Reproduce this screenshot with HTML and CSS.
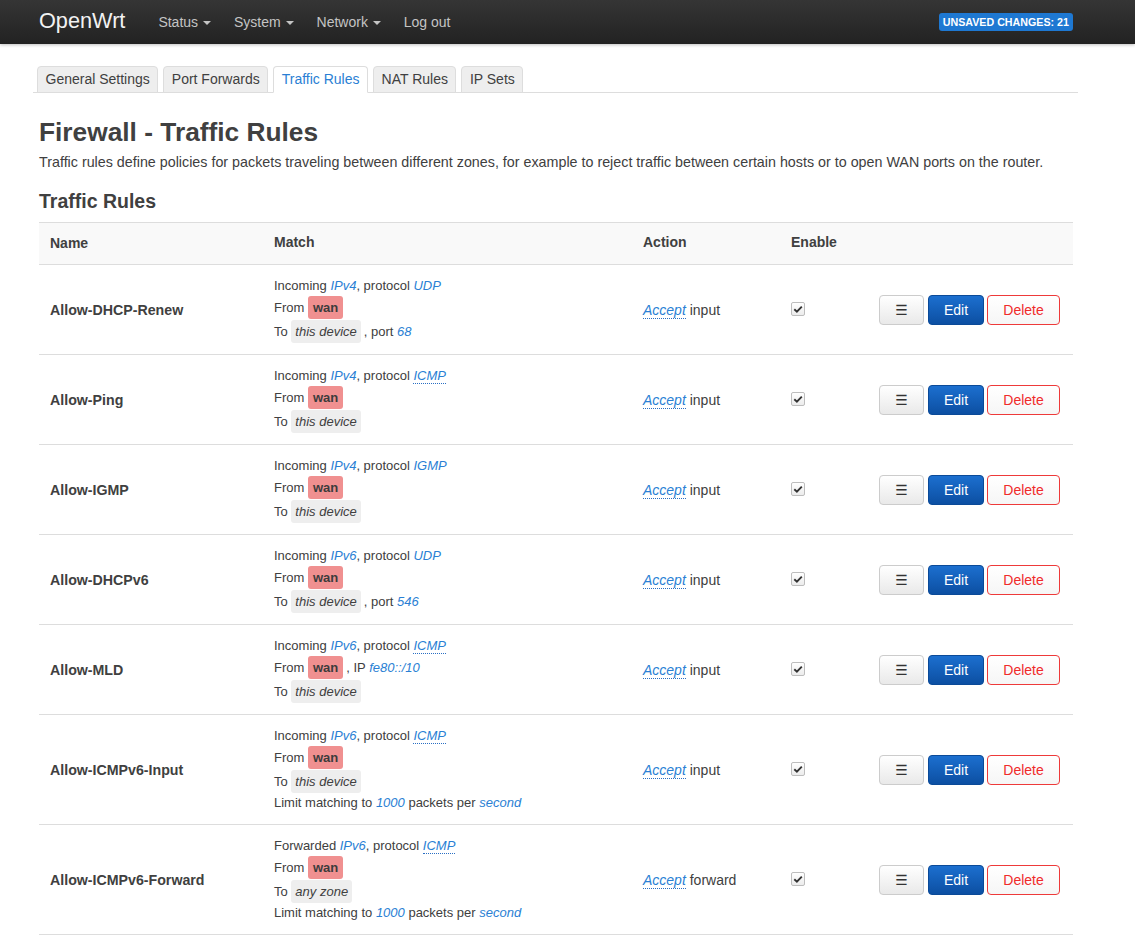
FILE: index.html
```html
<!DOCTYPE html>
<html lang="en">
<head>
<meta charset="utf-8">
<title>OpenWrt - Firewall - Traffic Rules</title>
<link rel="stylesheet" href="styles.css">
</head>
<body>
<header class="topbar">
  <a class="brand" href="#">OpenWrt</a>
  <ul class="nav">
    <li><a href="#">Status <span class="caret"></span></a></li>
    <li><a href="#">System <span class="caret"></span></a></li>
    <li><a href="#">Network <span class="caret"></span></a></li>
    <li><a href="#">Log out</a></li>
  </ul>
  <span class="unsaved">Unsaved Changes: 21</span>
</header>

<main class="container">
  <ul class="tabs">
    <li class="tab"><a href="#">General Settings</a></li>
    <li class="tab"><a href="#">Port Forwards</a></li>
    <li class="tab active"><a href="#">Traffic Rules</a></li>
    <li class="tab"><a href="#">NAT Rules</a></li>
    <li class="tab"><a href="#">IP Sets</a></li>
  </ul>

  <div class="content">
    <h2 class="title">Firewall - Traffic Rules</h2>
    <p class="desc">Traffic rules define policies for packets traveling between different zones, for example to reject traffic between certain hosts or to open WAN ports on the router.</p>
    <h3 class="section">Traffic Rules</h3>

    <table class="rules">
      <colgroup>
        <col class="c-name"><col class="c-match"><col class="c-action"><col class="c-enable"><col class="c-btns">
      </colgroup>
      <thead>
        <tr><th class="th-name">Name</th><th>Match</th><th>Action</th><th>Enable</th><th></th></tr>
      </thead>
      <tbody>
        <tr>
          <td class="name">Allow-DHCP-Renew</td>
          <td class="match">
            <div class="ml">Incoming <var>IPv4</var>, protocol <var>UDP</var></div>
            <div class="ml zl">From <span class="zone wan">wan</span></div>
            <div class="ml zl">To <span class="zone dev">this device</span>, port <var>68</var></div>
          </td>
          <td class="action"><var class="ul">Accept</var> input</td>
          <td class="enable"><span class="cb"><svg viewBox="0 0 14 14" width="14" height="14"><path d="M3.3 7.2 L5.9 9.6 L10.8 4.6" fill="none" stroke="#333" stroke-width="1.9"/></svg></span></td>
          <td class="btns"><button class="btn more">☰</button><button class="btn edit">Edit</button><button class="btn del">Delete</button></td>
        </tr>
        <tr>
          <td class="name">Allow-Ping</td>
          <td class="match">
            <div class="ml">Incoming <var>IPv4</var>, protocol <var class="ul">ICMP</var></div>
            <div class="ml zl">From <span class="zone wan">wan</span></div>
            <div class="ml zl">To <span class="zone dev">this device</span></div>
          </td>
          <td class="action"><var class="ul">Accept</var> input</td>
          <td class="enable"><span class="cb"><svg viewBox="0 0 14 14" width="14" height="14"><path d="M3.3 7.2 L5.9 9.6 L10.8 4.6" fill="none" stroke="#333" stroke-width="1.9"/></svg></span></td>
          <td class="btns"><button class="btn more">☰</button><button class="btn edit">Edit</button><button class="btn del">Delete</button></td>
        </tr>
        <tr>
          <td class="name">Allow-IGMP</td>
          <td class="match">
            <div class="ml">Incoming <var>IPv4</var>, protocol <var>IGMP</var></div>
            <div class="ml zl">From <span class="zone wan">wan</span></div>
            <div class="ml zl">To <span class="zone dev">this device</span></div>
          </td>
          <td class="action"><var class="ul">Accept</var> input</td>
          <td class="enable"><span class="cb"><svg viewBox="0 0 14 14" width="14" height="14"><path d="M3.3 7.2 L5.9 9.6 L10.8 4.6" fill="none" stroke="#333" stroke-width="1.9"/></svg></span></td>
          <td class="btns"><button class="btn more">☰</button><button class="btn edit">Edit</button><button class="btn del">Delete</button></td>
        </tr>
        <tr>
          <td class="name">Allow-DHCPv6</td>
          <td class="match">
            <div class="ml">Incoming <var>IPv6</var>, protocol <var>UDP</var></div>
            <div class="ml zl">From <span class="zone wan">wan</span></div>
            <div class="ml zl">To <span class="zone dev">this device</span>, port <var>546</var></div>
          </td>
          <td class="action"><var class="ul">Accept</var> input</td>
          <td class="enable"><span class="cb"><svg viewBox="0 0 14 14" width="14" height="14"><path d="M3.3 7.2 L5.9 9.6 L10.8 4.6" fill="none" stroke="#333" stroke-width="1.9"/></svg></span></td>
          <td class="btns"><button class="btn more">☰</button><button class="btn edit">Edit</button><button class="btn del">Delete</button></td>
        </tr>
        <tr>
          <td class="name">Allow-MLD</td>
          <td class="match">
            <div class="ml">Incoming <var>IPv6</var>, protocol <var class="ul">ICMP</var></div>
            <div class="ml zl">From <span class="zone wan">wan</span>, IP <var>fe80::/10</var></div>
            <div class="ml zl">To <span class="zone dev">this device</span></div>
          </td>
          <td class="action"><var class="ul">Accept</var> input</td>
          <td class="enable"><span class="cb"><svg viewBox="0 0 14 14" width="14" height="14"><path d="M3.3 7.2 L5.9 9.6 L10.8 4.6" fill="none" stroke="#333" stroke-width="1.9"/></svg></span></td>
          <td class="btns"><button class="btn more">☰</button><button class="btn edit">Edit</button><button class="btn del">Delete</button></td>
        </tr>
        <tr>
          <td class="name">Allow-ICMPv6-Input</td>
          <td class="match">
            <div class="ml">Incoming <var>IPv6</var>, protocol <var class="ul">ICMP</var></div>
            <div class="ml zl">From <span class="zone wan">wan</span></div>
            <div class="ml zl">To <span class="zone dev">this device</span></div>
            <div class="ml">Limit matching to <var>1000</var> packets per <var>second</var></div>
          </td>
          <td class="action"><var class="ul">Accept</var> input</td>
          <td class="enable"><span class="cb"><svg viewBox="0 0 14 14" width="14" height="14"><path d="M3.3 7.2 L5.9 9.6 L10.8 4.6" fill="none" stroke="#333" stroke-width="1.9"/></svg></span></td>
          <td class="btns"><button class="btn more">☰</button><button class="btn edit">Edit</button><button class="btn del">Delete</button></td>
        </tr>
        <tr>
          <td class="name">Allow-ICMPv6-Forward</td>
          <td class="match">
            <div class="ml">Forwarded <var>IPv6</var>, protocol <var class="ul">ICMP</var></div>
            <div class="ml zl">From <span class="zone wan">wan</span></div>
            <div class="ml zl">To <span class="zone dev">any zone</span></div>
            <div class="ml">Limit matching to <var>1000</var> packets per <var>second</var></div>
          </td>
          <td class="action"><var class="ul">Accept</var> forward</td>
          <td class="enable"><span class="cb"><svg viewBox="0 0 14 14" width="14" height="14"><path d="M3.3 7.2 L5.9 9.6 L10.8 4.6" fill="none" stroke="#333" stroke-width="1.9"/></svg></span></td>
          <td class="btns"><button class="btn more">☰</button><button class="btn edit">Edit</button><button class="btn del">Delete</button></td>
        </tr>
      </tbody>
    </table>
  </div>
</main>
</body>
</html>
```

FILE: styles.css
```css
* { box-sizing: border-box; }

html, body {
  margin: 0;
  padding: 0;
  background: #fff;
}

body {
  font-family: "Liberation Sans", Arial, sans-serif;
  font-size: 14px;
  color: #404040;
}

a { text-decoration: none; }

/* ---------- top bar ---------- */
.topbar {
  height: 44px;
  display: flex;
  align-items: center;
  padding: 0 62px 0 39px;
  background: linear-gradient(#353535, #222222);
  box-shadow: 0 1px 3px rgba(0,0,0,.25);
}

.brand {
  font-size: 21.7px;
  color: #f2f2f2;
  margin-right: 33px;
  line-height: 1;
  padding-bottom: 3px;
}

.nav {
  display: flex;
  gap: 23px;
  margin: 0;
  padding: 0;
  list-style: none;
}

.nav a {
  color: #c4c4c4;
  font-size: 14px;
}

.caret {
  display: inline-block;
  width: 0;
  height: 0;
  margin-left: 1px;
  vertical-align: middle;
  border-left: 4px solid transparent;
  border-right: 4px solid transparent;
  border-top: 4px solid #c4c4c4;
}

.unsaved {
  margin-left: auto;
  background: #1e78d2;
  color: #fff;
  font-size: 10.7px;
  font-weight: bold;
  text-transform: uppercase;
  padding: 2px 4px 2px;
  border-radius: 3px;
  line-height: 14px;
}

/* ---------- container & tabs ---------- */
.container {
  width: 1045px;
  margin-left: 33px;
}

.tabs {
  display: flex;
  gap: 5px;
  margin: 22px 0 0;
  padding: 0 0 0 4px;
  list-style: none;
  border-bottom: 1px solid #dddddd;
}

.tab {
  margin-bottom: -1px;
}

.tab a {
  display: block;
  height: 27px;
  padding: 0 7.5px;
  line-height: 25px;
  font-size: 14px;
  color: #404040;
  background: #eeeeee;
  border: 1px solid #dddddd;
  border-radius: 4px 4px 0 0;
}

.tab.active a {
  background: #ffffff;
  color: #2a7fd4;
  border-bottom-color: #ffffff;
}

.content {
  padding: 0 5px 0 6px;
}

.title {
  font-size: 26.3px;
  font-weight: bold;
  margin: 24px 0 0;
  line-height: 30px;
}

.desc {
  font-size: 14.3px;
  margin: 5px 0 0;
  line-height: 20px;
}

.section {
  font-size: 19.5px;
  font-weight: bold;
  margin: 18px 0 0;
  line-height: 22px;
}

/* ---------- table ---------- */
.rules {
  width: 100%;
  margin-top: 10px;
  border-collapse: collapse;
  table-layout: fixed;
}

.c-name { width: 224px; }
.c-match { width: 369px; }
.c-action { width: 148px; }
.c-enable { width: 88px; }

.rules th {
  text-align: left;
  font-weight: bold;
  font-size: 14px;
  height: 42px;
  padding: 0 11px 4px;
  background: #f9f9f9;
  border-top: 1px solid #dddddd;
  border-bottom: 1px solid #dddddd;
}

.rules th.th-name { padding-bottom: 2px; }

.rules td {
  border-top: 1px solid #dddddd;
  padding: 0 11px;
  vertical-align: middle;
}

.rules tbody tr:last-child td { border-bottom: 1px solid #dddddd; }

.name {
  font-weight: bold;
  font-size: 14.2px;
  white-space: nowrap;
}

.rules td.match {
  padding-top: 11px;
  padding-bottom: 11px;
  font-size: 13px;
}

.ml {
  height: 20px;
  line-height: 20px;
  white-space: nowrap;
}

.ml.zl {
  height: 23.5px;
  line-height: 23.5px;
}

var {
  font-style: italic;
  color: #2a7fd4;
}

var.ul {
  border-bottom: 1px dotted #2a6fc4;
}

.zone {
  display: inline-block;
  vertical-align: top;
  height: 23px;
  line-height: 23px;
  border-radius: 3px;
  margin-right: 3px;
}

.zone.wan {
  background: #f09090;
  font-weight: bold;
  padding: 0 5px;
  color: #3c3c3c;
}

.zone.dev {
  background: #eeeeee;
  font-style: italic;
  padding: 0 4px;
}

.action {
  font-size: 14px;
}

.cb {
  display: inline-block;
  width: 14px;
  height: 14px;
  border: 1px solid #bdbdbd;
  border-radius: 2px;
  background: linear-gradient(#ffffff, #ececec);
  vertical-align: middle;
  margin-top: -4px;
  position: relative;
}

.cb svg {
  position: absolute;
  left: -1px;
  top: -1px;
}

.rules td.btns {
  text-align: right;
  padding-right: 13px;
  white-space: nowrap;
}

.btn {
  font-family: "Liberation Sans", Arial, sans-serif;
  font-size: 14px;
  height: 30px;
  border-radius: 4px;
  vertical-align: middle;
  cursor: pointer;
  padding: 0;
}

.btn.more {
  width: 45px;
  font-family: "DejaVu Sans", sans-serif;
  font-size: 14px;
  color: #333;
  background: linear-gradient(#ffffff, #e9e9e9);
  border: 1px solid #cccccc;
}

.btn.edit {
  width: 56px;
  margin-left: 4px;
  color: #fff;
  background: linear-gradient(#1c6fcf, #0c4fa2);
  border: 1px solid #0b4a98;
}

.btn.del {
  width: 73px;
  margin-left: 3px;
  color: #f02a2a;
  background: linear-gradient(#ffffff, #f6f6f6);
  border: 1px solid #ee3a3a;
}
```
